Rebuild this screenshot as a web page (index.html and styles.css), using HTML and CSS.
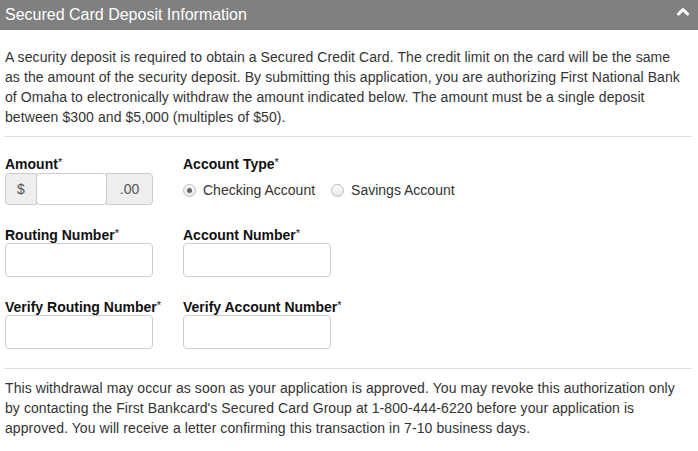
FILE: index.html
```html
<!DOCTYPE html>
<html>

<head>
  <meta charset="utf-8">
  <title>Secured Card Deposit Information</title>
  <link rel="stylesheet" href="styles.css">
</head>

<body>
  <div class="panel">
    <div class="panelHead">
      <span>Secured Card Deposit Information</span>
      <svg class="chevron" width="12" height="9" viewBox="0 0 12 9">
        <path d="M1.5 7 L6 2.5 L10.5 7" fill="none" stroke="#fff" stroke-width="3" stroke-linecap="round" stroke-linejoin="round"></path>
      </svg>
    </div>
    <div class="panelBody">
      <p class="note">A security deposit is required to obtain a Secured Credit Card. The credit limit on the card will be the same<br>
        as the amount of the security deposit. By submitting this application, you are authorizing First National Bank<br>
        of Omaha to electronically withdraw the amount indicated below. The amount must be a single deposit<br>
        between $300 and $5,000 (multiples of $50).</p>
      <hr>
      <div class="fields">
        <div class="field">
          <label>Amount<span class="req">*</span></label>
          <div class="inputGroup">
            <span class="addon first">$</span>
            <input type="text" class="amount">
            <span class="addon last">.00</span>
          </div>
        </div>
        <div class="field">
          <label>Account Type<span class="req">*</span></label>
          <div class="radios">
            <span class="radio checked"></span>
            <span class="radioText">Checking Account</span>
            <span class="radio"></span>
            <span class="radioText">Savings Account</span>
          </div>
        </div>
        <div class="field row2">
          <label>Routing Number<span class="req">*</span></label>
          <input type="text" class="box">
        </div>
        <div class="field row2">
          <label>Account Number<span class="req">*</span></label>
          <input type="text" class="box">
        </div>
        <div class="field row2">
          <label>Verify Routing Number<span class="req">*</span></label>
          <input type="text" class="box">
        </div>
        <div class="field row2">
          <label>Verify Account Number<span class="req">*</span></label>
          <input type="text" class="box">
        </div>
      </div>
      <hr class="lower">
      <p class="note bottom">This withdrawal may occur as soon as your application is approved. You may revoke this authorization only<br>
        by contacting the First Bankcard's Secured Card Group at 1-800-444-6220 before your application is<br>
        approved. You will receive a letter confirming this transaction in 7-10 business days.</p>
    </div>
  </div>
</body>

</html>
```

FILE: styles.css
```css
* {
  box-sizing: border-box;
}

body {
  margin: 0;
  font-family: "Liberation Sans", Arial, sans-serif;
  font-size: 14px;
  line-height: 20px;
  color: #333;
  background: #fff;
}

.panelHead {
  height: 30px;
  background: #808080;
  color: #fff;
  font-size: 16px;
  padding: 0 9px 0 5px;
  display: flex;
  align-items: center;
  justify-content: space-between;
}

.chevron {
  margin-top: -7px;
}

.panelBody {
  padding: 0 6px 0 5px;
}

.note {
  margin: 17px 0 0;
  letter-spacing: 0.08px;
  white-space: nowrap;
}

.note.bottom {
  margin-top: 9px;
}

hr {
  border: 0;
  border-top: 1px solid #ddd;
  margin: 9px 0 0 -1px;
  height: 0;
}

hr.lower {
  margin-top: 19px;
}

.fields {
  display: grid;
  grid-template-columns: 178px 1fr;
  padding-top: 15px;
}

.field label {
  display: block;
  font-weight: bold;
  color: #111;
  line-height: 16px;
  padding-top: 4px;
}

.req {
  font-weight: normal;
  font-size: 11px;
  vertical-align: top;
  line-height: 12px;
}

.inputGroup {
  display: flex;
  margin-top: 1px;
  height: 32px;
}

.addon {
  background: #eee;
  border: 1px solid #ccc;
  color: #555;
  display: flex;
  align-items: center;
  justify-content: center;
}

.addon.first {
  width: 32px;
  border-radius: 4px 0 0 4px;
}

.addon.last {
  width: 47px;
  border-radius: 0 4px 4px 0;
}

input {
  font: inherit;
  border: 1px solid #ccc;
  background: #fff;
}

.amount {
  width: 71px;
  border-radius: 4px;
  margin: 0 -1px;
  position: relative;
}

.radios {
  display: flex;
  align-items: center;
  height: 32px;
  margin-top: 1px;
  padding-top: 2px;
}

.radio {
  width: 13px;
  height: 13px;
  border-radius: 50%;
  border: 1px solid #bbb;
  background: linear-gradient(#fcfcfc, #e6e6e6);
  margin-right: 7px;
  position: relative;
}

.radio.checked::after {
  content: "";
  position: absolute;
  left: 3px;
  top: 3px;
  width: 5px;
  height: 5px;
  border-radius: 50%;
  background: #666;
}

.radioText {
  margin-right: 16px;
}

.row2 {
  margin-top: 18px;
}

.box {
  width: 148px;
  height: 34px;
  border-radius: 4px;
  display: block;
}
```
